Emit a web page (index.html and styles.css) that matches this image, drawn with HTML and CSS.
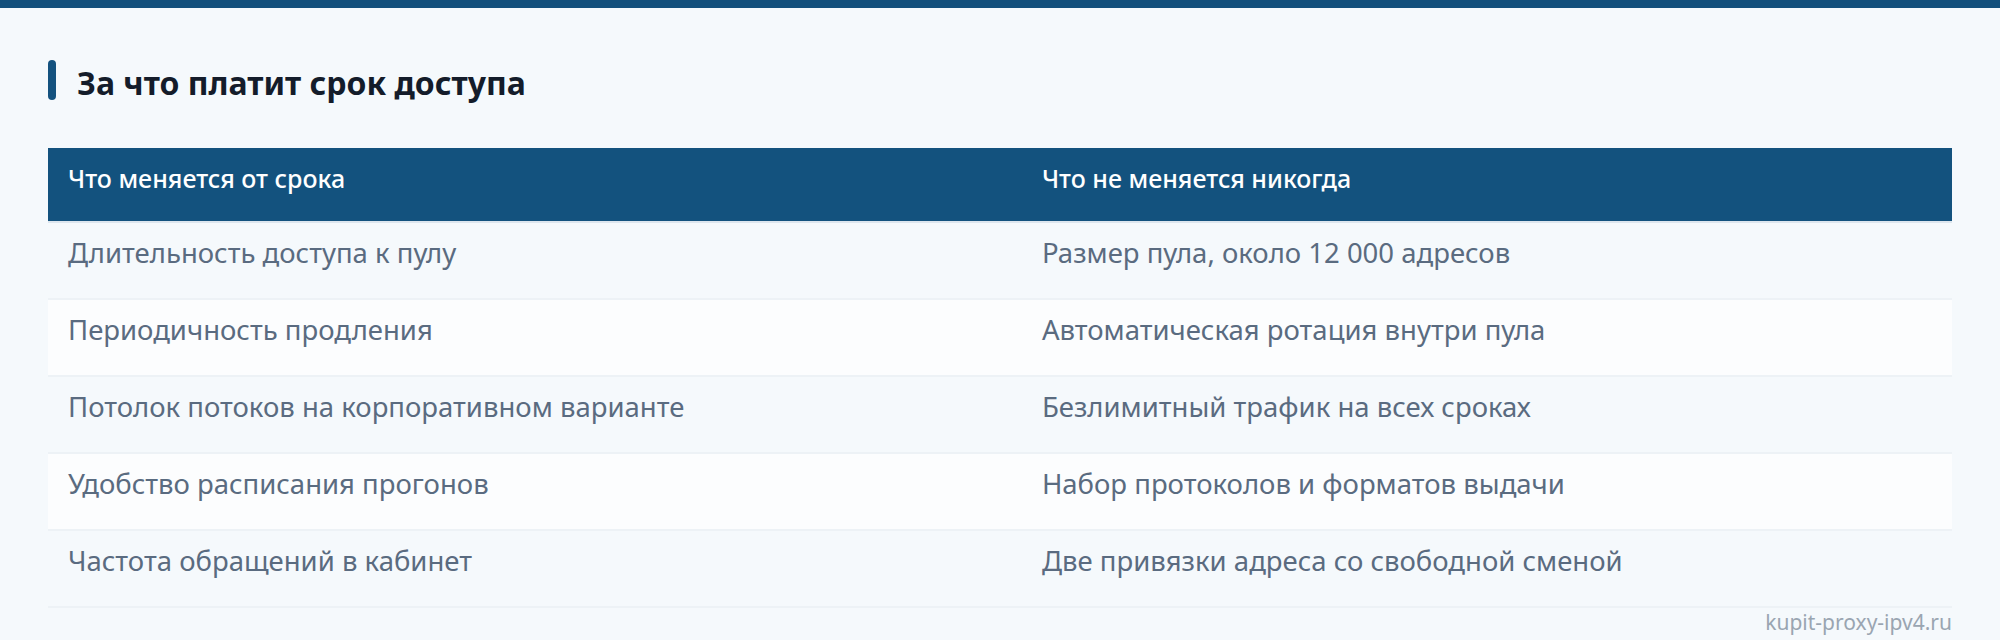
FILE: index.html
```html
<!DOCTYPE html>
<html lang="ru">
<head>
<meta charset="utf-8">
<title>За что платит срок доступа</title>
<link rel="stylesheet" href="styles.css">
</head>
<body>
<div class="topbar"></div>
<main class="page">
  <h2 class="title">За что платит срок доступа</h2>
  <table class="compare">
    <colgroup><col class="c1"><col class="c2"></colgroup>
    <thead>
      <tr><th>Что меняется от срока</th><th>Что не меняется никогда</th></tr>
    </thead>
    <tbody>
      <tr><td>Длительность доступа к пулу</td><td>Размер пула, около 12 000 адресов</td></tr>
      <tr><td>Периодичность продления</td><td>Автоматическая ротация внутри пула</td></tr>
      <tr><td>Потолок потоков на корпоративном варианте</td><td>Безлимитный трафик на всех сроках</td></tr>
      <tr><td>Удобство расписания прогонов</td><td>Набор протоколов и форматов выдачи</td></tr>
      <tr><td>Частота обращений в кабинет</td><td>Две привязки адреса со свободной сменой</td></tr>
    </tbody>
  </table>
  <div class="mark">kupit-proxy-ipv4.ru</div>
</main>
</body>
</html>
```

FILE: styles.css
```css
* { box-sizing: border-box; }
html, body { margin: 0; padding: 0; }
body {
  background: #f5f9fc;
  font-family: "Noto Sans", "Open Sans", "DejaVu Sans", sans-serif;
  width: 2000px;
  height: 640px;
  overflow: hidden;
}
.topbar { height: 8px; background: #13507c; }
.page { padding: 48px 48px 0 48px; }
.title {
  margin: 4px 0 0 0;
  font-size: 32px;
  font-weight: 700;
  color: #141c2a;
  line-height: 40px;
  padding: 3px 0 0 29px;
  position: relative;
}
.title::before {
  content: "";
  position: absolute;
  left: 0; top: 0;
  width: 8px; height: 40px;
  border-radius: 4px;
  background: #14527f;
}
.compare {
  margin-top: 45px;
  width: 100%;
  border-collapse: collapse;
  table-layout: fixed;
}
.c1 { width: 51.15%; }
.compare th {
  background: #13527e;
  color: #ffffff;
  text-align: left;
  font-weight: 500;
  font-size: 25px;
  height: 74px;
  padding: 0 20px 13px 20px;
  border-bottom: 2px solid #dde6ee;
}
.compare td {
  font-size: 27.5px;
  color: #5a6b80;
  height: 77px;
  padding: 0 20px 16px 20px;
  border-bottom: 2px solid #edf2f6;
  background: #f5f9fc;
}
.compare tbody tr:nth-child(even) td { background: #fcfdfe; }
.mark {
  text-align: right;
  font-size: 21px;
  color: #9aa5b1;
  margin-top: 0;
}
```
